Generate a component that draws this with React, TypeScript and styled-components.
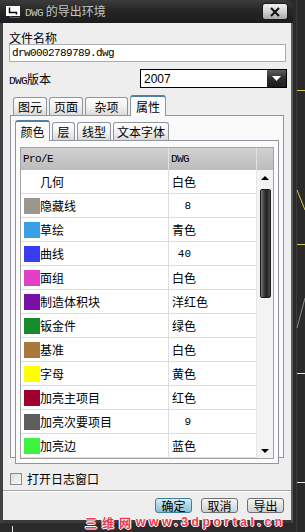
import React from "react";
import styled, { createGlobalStyle, css } from "styled-components";

const CJK = `"Noto Sans CJK SC", "Noto Sans", sans-serif`;
const MONO = `"Liberation Mono", "Noto Sans CJK SC", monospace`;

const GlobalStyle = createGlobalStyle`
  html, body { margin: 0; padding: 0; background: #2a2a2a; }
  body { font-family: ${CJK}; font-size: 12px; color: #000; }
  * { box-sizing: border-box; }
`;

const Screen = styled.div`
  width: 305px;
  height: 532px;
  display: flex;
  position: relative;
  overflow: hidden;
  background: #2a2a2a;
`;

const LeftCol = styled.div`
  width: 293px;
  display: flex;
  flex-direction: column;
`;

const Dialog = styled.div`
  height: 523px;
  display: flex;
  flex-direction: column;
`;

const TitleBar = styled.div`
  height: 23px;
  flex: none;
  display: flex;
  align-items: center;
  padding: 0 5px 0 5px;
  background: linear-gradient(#3c3c3c, #262626 45%, #1c1c1c);
  border-radius: 0 7px 0 0;
`;

const TitleText = styled.div`
  margin-left: 4px;
  color: #c4c4c4;
  font-size: 12px;
  line-height: 12px;
  font-family: ${CJK};
`;

const Mono = styled.span`
  font-family: ${MONO};
  font-size: 11px;
  letter-spacing: -0.6px;
`;

const CloseButton = styled.div`
  margin-left: auto;
  width: 26px;
  height: 17px;
  border: 1px solid #1a1a1a;
  border-radius: 3px;
  background: linear-gradient(#f0f0f0, #d2d2d2 50%, #a9a9a9);
  display: flex;
  align-items: center;
  justify-content: center;
`;

const Body = styled.div`
  flex: 1;
  display: flex;
  flex-direction: column;
  background: #eeeeee;
  border-left: 3px solid #414141;
  border-right: 2px solid #5c5c5c;
  border-bottom: 3px solid #3a3a3a;
`;

const Content = styled.div`
  display: flex;
  flex-direction: column;
  padding: 0 4px 0 6px;
`;

const FieldLabel = styled.div`
  margin-top: 9px;
  height: 12px;
  line-height: 12px;
  font-size: 12px;
`;

const TextInput = styled.div`
  height: 18px;
  margin-right: 1px;
  border: 1px solid #a7aeb5;
  background: #fff;
  padding-left: 2px;
  display: flex;
  align-items: center;
  font-family: ${MONO};
  font-size: 11px;
  letter-spacing: -0.6px;
`;

const VersionRow = styled.div`
  margin-top: 7px;
  height: 19px;
  display: flex;
  align-items: center;
  justify-content: space-between;
`;

const Select = styled.div`
  width: 147px;
  height: 19px;
  border: 1px solid #000;
  background: #fff;
  display: flex;
  align-items: center;
  padding-left: 3px;
  font-family: "Liberation Sans", sans-serif;
  font-size: 12px;
`;

const DropButton = styled.div`
  margin-left: auto;
  width: 19px;
  height: 17px;
  background: linear-gradient(#5e5e5e, #2c2c2c 50%, #1c1c1c);
  display: flex;
  align-items: center;
  justify-content: center;
`;

const TabArea = styled.div<{ $m: string }>`
  display: flex;
  flex-direction: column;
  margin: ${(p) => p.$m};
`;

const TabStrip = styled.div<{ $pl: number }>`
  height: 20px;
  display: flex;
  align-items: flex-end;
  gap: 2px;
  padding-left: ${(p) => p.$pl}px;
`;

const Tab = styled.div<{ $w: number; $active?: boolean }>`
  width: ${(p) => p.$w}px;
  height: 18px;
  display: flex;
  align-items: center;
  justify-content: center;
  border: 1px solid #8e979f;
  border-bottom: none;
  border-radius: 3px 3px 0 0;
  background: linear-gradient(#ffffff, #f0f0f0 55%, #dadada);
  font-size: 12px;
  line-height: 12px;
  ${(p) =>
    p.$active &&
    css`
      height: 21px;
      margin-bottom: -1px;
      position: relative;
      z-index: 1;
      background: #fbfbfb;
      border-top: 2px solid #4f7ea6;
      padding-top: 1px;
    `}
`;

const OuterPanel = styled.div`
  height: 343px;
  border: 1px solid #8e979f;
  background: #f9f9f9;
  padding: 4px 4px 2px 4px;
  display: flex;
  flex-direction: column;
`;

const InnerPanel = styled.div`
  flex: 1;
  border: 1px solid #8e979f;
  background: #fbfbfb;
  padding: 6px 4px 4px 4px;
  display: flex;
`;

const Table = styled.div`
  flex: 1;
  border: 1px solid #a2a2a2;
  background: #fff;
  display: flex;
  flex-direction: column;
  overflow: hidden;
`;

const HeaderRow = styled.div`
  height: 22px;
  flex: none;
  display: grid;
  grid-template-columns: 147px 88px 17px;
  background: linear-gradient(#d2d2d2, #bcbcbc);
  font-family: ${MONO};
  font-size: 11px;
  letter-spacing: -0.6px;
`;

const HeaderCell = styled.div<{ $divider?: boolean }>`
  display: flex;
  align-items: center;
  padding-left: 2px;
  ${(p) => p.$divider && css`border-left: 1px solid #e2e2e2;`}
`;

const TableBody = styled.div`
  flex: 1;
  display: flex;
  min-height: 0;
`;

const RowList = styled.div`
  width: 235px;
  overflow: hidden;
`;

const Row = styled.div`
  height: 24px;
  display: grid;
  grid-template-columns: 147px 88px;
  border-bottom: 1px solid #dedede;
`;

const NameCell = styled.div`
  display: flex;
  align-items: center;
  padding-left: 3px;
  font-size: 12px;
`;

const Swatch = styled.div<{ $c: string }>`
  width: 16px;
  height: 16px;
  flex: none;
  background: ${(p) => p.$c};
`;

const ValueCell = styled.div`
  display: flex;
  align-items: center;
  padding-left: 3px;
  border-left: 1px solid #dedede;
  font-size: 12px;
`;

const NumberValue = styled.span`
  width: 19px;
  text-align: right;
  font-family: ${MONO};
  font-size: 11px;
`;

const Scrollbar = styled.div`
  width: 17px;
  background: #f3f3f3;
  border-left: 1px solid #e6e6e6;
  display: flex;
  flex-direction: column;
  align-items: center;
  padding: 6px 0 5px;
`;

const Arrow = styled.div<{ $down?: boolean }>`
  width: 0;
  height: 0;
  border-left: 4px solid transparent;
  border-right: 4px solid transparent;
  ${(p) =>
    p.$down
      ? css`border-top: 4px solid #000; margin-top: auto;`
      : css`border-bottom: 4px solid #000;`}
`;

const Thumb = styled.div`
  margin-top: 9px;
  width: 11px;
  height: 109px;
  border: 1px solid #1c1c1c;
  border-radius: 2px;
  background: linear-gradient(90deg, #7a7a7a, #3a3a3a 35%, #222 65%, #4c4c4c);
`;

const CheckRow = styled.label`
  margin-top: 14px;
  margin-left: 1px;
  height: 13px;
  display: flex;
  align-items: center;
  gap: 5px;
  font-size: 12px;
`;

const CheckBox = styled.span`
  width: 12px;
  height: 12px;
  border: 1px solid #8a8a8a;
  background: linear-gradient(135deg, #dcdcdc, #f8f8f8);
`;

const Footer = styled.div`
  flex: 1;
  margin-top: 5px;
  border-top: 1px solid #a4a4a4;
  box-shadow: inset 0 1px #ffffff;
  display: flex;
  justify-content: flex-end;
  align-items: flex-start;
  gap: 9px;
  padding: 7px 7px 0 0;
`;

const Button = styled.div<{ $default?: boolean }>`
  width: 37px;
  height: 15px;
  border: 1px solid #6f6f6f;
  border-radius: 3px;
  display: flex;
  align-items: center;
  justify-content: center;
  font-size: 12px;
  line-height: 12px;
  background: linear-gradient(#f6f6f6, #e2e2e2 50%, #cfcfcf);
  ${(p) =>
    p.$default &&
    css`
      border-color: #3f7f9c;
      background: linear-gradient(#d6eef6, #aed6e4 50%, #8cc0d2);
    `}
`;

const BottomStrip = styled.div`
  flex: 1;
  padding-left: 12px;
  padding-top: 3px;
`;

const Tick = styled.div`
  width: 1px;
  height: 6px;
  background: #e8e8e8;
`;

const Watermark = styled.div`
  position: absolute;
  left: 85px;
  top: 517px;
  height: 11px;
  display: flex;
  align-items: center;
  font-weight: 700;
  color: #e6374d;
  text-shadow: 1px 0 #fff, -1px 0 #fff, 0 1px #fff, 0 -1px #fff, 1px 1px #b01c30, -1px -1px #ffd0d6;
  line-height: 11px;
  white-space: nowrap;
`;

const WmCjk = styled.span`
  font-family: ${CJK};
  font-size: 12px;
  letter-spacing: 5px;
`;

const WmLatin = styled.span`
  font-family: "Liberation Sans", sans-serif;
  font-size: 12px;
  letter-spacing: 3.6px;
`;

const rows: { name: string; color: string; value: string; num?: boolean }[] = [
  { name: "几何", color: "#ffffff", value: "白色" },
  { name: "隐藏线", color: "#9b968e", value: "8", num: true },
  { name: "草绘", color: "#3aa0e6", value: "青色" },
  { name: "曲线", color: "#3a3cf2", value: "40", num: true },
  { name: "面组", color: "#e03fc6", value: "白色" },
  { name: "制造体积块", color: "#7810a6", value: "洋红色" },
  { name: "钣金件", color: "#178a2e", value: "绿色" },
  { name: "基准", color: "#a8783a", value: "白色" },
  { name: "字母", color: "#ffff00", value: "黄色" },
  { name: "加亮主项目", color: "#a0002e", value: "红色" },
  { name: "加亮次要项目", color: "#5e5e5e", value: "9", num: true },
  { name: "加亮边", color: "#3ef23e", value: "蓝色" },
];

const TitleIcon = () => (
  <svg width="16" height="15" viewBox="0 0 16 15">
    <rect x="1" y="2" width="14" height="10" fill="#fff" />
    <path d="M4.5 3.5 V8.5 H11.5 V10.5" stroke="#000" strokeWidth="1.4" fill="none" />
    <path d="M5 13.5 H15" stroke="#3d5fb8" strokeWidth="1" />
    <path d="M5.5 12 V14" stroke="#3d5fb8" strokeWidth="1" />
  </svg>
);

const CloseIcon = () => (
  <svg width="12" height="10" viewBox="0 0 12 10">
    <path d="M2 1 L10 9 M10 1 L2 9" stroke="#111" strokeWidth="2" />
  </svg>
);

const CadStrip = () => (
  <svg width="12" height="532" viewBox="0 0 12 532" style={{ flex: "none" }}>
    <rect width="12" height="532" fill="#2a2a2a" />
    <line x1="3.5" y1="0" x2="3.5" y2="532" stroke="#3b3b3b" />
    <line x1="4" y1="90.5" x2="12" y2="90.5" stroke="#d6c84a" />
    <line x1="4" y1="190" x2="12" y2="210" stroke="#d6c84a" />
    <line x1="4" y1="244.5" x2="12" y2="244.5" stroke="#d6c84a" />
    <line x1="12" y1="298" x2="4" y2="328" stroke="#8a8a8a" />
    <line x1="4" y1="373.5" x2="12" y2="373.5" stroke="#e8e8e8" />
    <line x1="4" y1="482.5" x2="12" y2="482.5" stroke="#e8e8e8" />
  </svg>
);

export default function App() {
  return (
    <Screen>
      <GlobalStyle />
      <LeftCol>
        <Dialog>
          <TitleBar>
            <TitleIcon />
            <TitleText>
              <Mono>DWG</Mono> 的导出环境
            </TitleText>
            <CloseButton>
              <CloseIcon />
            </CloseButton>
          </TitleBar>
          <Body>
            <Content>
              <FieldLabel>文件名称</FieldLabel>
              <TextInput>drw0002789789.dwg</TextInput>
              <VersionRow>
                <span>
                  <Mono>DWG</Mono>版本
                </span>
                <Select>
                  2007
                  <DropButton>
                    <svg width="9" height="5" viewBox="0 0 9 5">
                      <path d="M0 0 H9 L4.5 5 Z" fill="#fff" />
                    </svg>
                  </DropButton>
                </Select>
              </VersionRow>
              <TabArea $m="7px 3px 0 1px">
                <TabStrip $pl={3}>
                  <Tab $w={34}>图元</Tab>
                  <Tab $w={34}>页面</Tab>
                  <Tab $w={43}>杂项</Tab>
                  <Tab $w={36} $active>
                    属性
                  </Tab>
                </TabStrip>
                <OuterPanel>
                  <TabStrip $pl={0}>
                    <Tab $w={35} $active>
                      颜色
                    </Tab>
                    <Tab $w={23}>层</Tab>
                    <Tab $w={34}>线型</Tab>
                    <Tab $w={56}>文本字体</Tab>
                  </TabStrip>
                  <InnerPanel>
                    <Table>
                      <HeaderRow>
                        <HeaderCell>Pro/E</HeaderCell>
                        <HeaderCell $divider>DWG</HeaderCell>
                        <HeaderCell $divider />
                      </HeaderRow>
                      <TableBody>
                        <RowList>
                          {rows.map((r) => (
                            <Row key={r.name}>
                              <NameCell>
                                <Swatch $c={r.color} />
                                {r.name}
                              </NameCell>
                              <ValueCell>
                                {r.num ? <NumberValue>{r.value}</NumberValue> : r.value}
                              </ValueCell>
                            </Row>
                          ))}
                        </RowList>
                        <Scrollbar>
                          <Arrow />
                          <Thumb />
                          <Arrow $down />
                        </Scrollbar>
                      </TableBody>
                    </Table>
                  </InnerPanel>
                </OuterPanel>
              </TabArea>
              <CheckRow>
                <CheckBox />
                打开日志窗口
              </CheckRow>
            </Content>
            <Footer>
              <Button $default>确定</Button>
              <Button>取消</Button>
              <Button>导出</Button>
            </Footer>
          </Body>
        </Dialog>
        <BottomStrip>
          <Tick />
        </BottomStrip>
      </LeftCol>
      <CadStrip />
      <Watermark>
        <WmCjk>三维网</WmCjk>
        <WmLatin>www.3dportal.cn</WmLatin>
      </Watermark>
    </Screen>
  );
}
